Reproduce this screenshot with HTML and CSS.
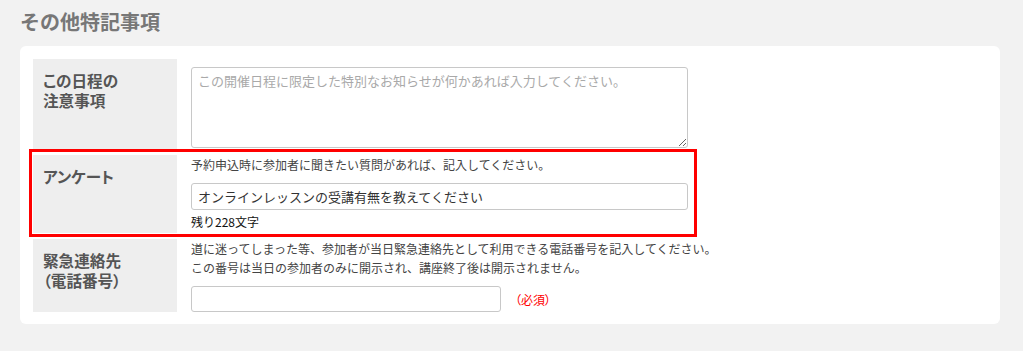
FILE: index.html
```html
<!DOCTYPE html>
<html lang="ja">
<head>
<meta charset="utf-8">
<title>その他特記事項</title>
<link rel="stylesheet" href="styles.css">
</head>
<body>
<h2 class="section-title">その他特記事項</h2>
<div class="card">
  <div class="rows">
    <div class="row">
      <div class="label">この日程の<br>注意事項</div>
      <div class="field field-notes">
        <textarea class="textarea" placeholder="この開催日程に限定した特別なお知らせが何かあれば入力してください。"></textarea>
      </div>
    </div>
    <div class="row row-highlight">
      <div class="label">アンケート</div>
      <div class="field">
        <p class="desc">予約申込時に参加者に聞きたい質問があれば、記入してください。</p>
        <input class="input input-wide" type="text" value="オンラインレッスンの受講有無を教えてください">
        <p class="counter">残り228文字</p>
      </div>
      <div class="highlight"></div>
    </div>
    <div class="row">
      <div class="label">緊急連絡先<br>（電話番号）</div>
      <div class="field">
        <p class="desc">道に迷ってしまった等、参加者が当日緊急連絡先として利用できる電話番号を記入してください。<br>この番号は当日の参加者のみに開示され、講座終了後は開示されません。</p>
        <div class="input-line">
          <input class="input input-phone" type="text">
          <span class="required">（必須）</span>
        </div>
      </div>
    </div>
  </div>
</div>
</body>
</html>
```

FILE: styles.css
```css
* {
  box-sizing: border-box;
}

body {
  margin: 0;
  padding: 10px 23px 0 20px;
  background: #f2f2f2;
  font-family: "Noto Sans CJK JP", "Noto Sans", sans-serif;
  color: #333;
}

.section-title {
  margin: 0 0 12px;
  font-size: 20px;
  line-height: 24px;
  font-weight: 700;
  color: #777;
}

.card {
  background: #fff;
  border-radius: 6px;
  padding: 13px 13px 12px;
}

.rows {
  display: flex;
  flex-direction: column;
  gap: 6px;
}

.row {
  display: grid;
  grid-template-columns: 144px 1fr;
}

.row-highlight {
  position: relative;
  min-height: 78px;
}

.label {
  background: #eeeeee;
  padding: 12px 10px;
  font-size: 15.6px;
  line-height: 19.5px;
  font-weight: 700;
  color: #555;
  font-feature-settings: "palt";
}

.field {
  padding-left: 14px;
}

.field-notes {
  padding-top: 8px;
  padding-bottom: 1px;
}

.textarea {
  display: block;
  width: 497px;
  height: 81px;
  margin: 0;
  padding: 4px 6px;
  border: 1px solid #c8c8c8;
  border-radius: 3px;
  font-family: inherit;
  font-size: 13px;
  line-height: 18px;
  color: #333;
  background: #fff;
}

.textarea::placeholder {
  color: #a9a9a9;
}

.desc {
  margin: 0;
  font-size: 12px;
  line-height: 19px;
  color: #444;
}

.input {
  display: block;
  height: 27px;
  margin: 0;
  padding: 0 6px;
  border: 1px solid #c8c8c8;
  border-radius: 3px;
  font-family: inherit;
  font-size: 13px;
  color: #333;
  background: #fff;
}

.input-wide {
  width: 497px;
  margin-top: 9px;
}

.counter {
  margin: 2px 0 0;
  font-size: 12px;
  line-height: 19px;
  color: #111;
}

.input-line {
  display: flex;
  align-items: center;
  margin-top: 9px;
}

.input-phone {
  width: 310px;
  height: 26px;
}

.required {
  margin-left: 14px;
  font-size: 12px;
  color: #ff0000;
  font-feature-settings: "palt";
}

.highlight {
  position: absolute;
  left: -4px;
  top: -6px;
  width: 668px;
  height: 88px;
  border: 3px solid #ff0000;
  pointer-events: none;
}
```
